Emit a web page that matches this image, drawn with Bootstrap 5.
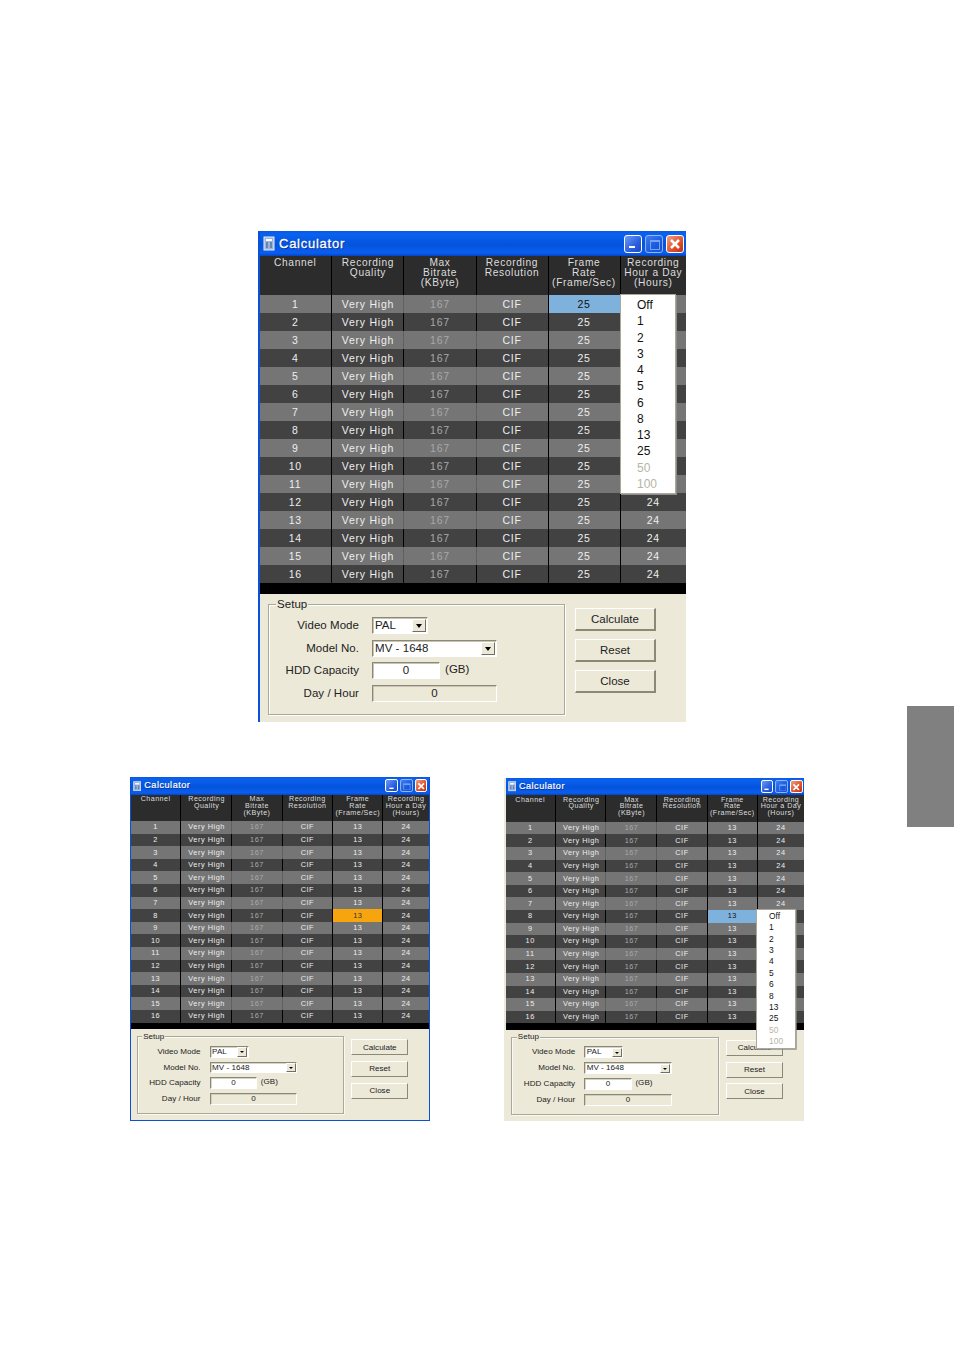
<!DOCTYPE html>
<html lang="en">
<head>
<meta charset="utf-8">
<title>Calculator</title>
<link href="https://cdn.jsdelivr.net/npm/bootstrap@5.3.0/dist/css/bootstrap.min.css" rel="stylesheet">
<style>
body{background:#fff;font-family:"Liberation Sans",Arial,sans-serif;}
.sheet{position:relative;width:954px;height:1348px;padding:231px 0 0 258px;overflow:hidden;}
.side-tab{position:absolute;right:0;top:706px;width:47px;height:121px;background:#808080;}
.lower-row{margin:55px 0 0 -128px;gap:74px;}
.calc-win{position:relative;width:428px;height:491px;background:#ece9d8;border-left:2px solid #0a50d8;flex:none;}
.win-small{zoom:.7;}
.win-framed{border:2px solid #0a50d8;border-top:0;}
.win-shift{margin-top:1px;width:429px;border-left:3px solid #ece9d8;}
.title-strip{height:25px;padding:0 2px 0 3px;background:linear-gradient(#0a58e4,#0a62ee 12%,#0453dc 55%,#0a5ef0 88%,#0345c0);color:#fff;font-weight:400;font-size:13px;letter-spacing:.75px;-webkit-text-stroke:.3px #fff;text-shadow:1px 1px #0a2f90;}
.title-strip svg{flex:none;}
.wbtn{width:18px;height:18px;border:1px solid #fff;border-radius:3px;background:linear-gradient(135deg,#6f9bf2,#2a5fe0 60%,#1d49c4);margin-left:3px;position:relative;flex:none;}
.wbtn-off{opacity:.55;}
.wbtn-close{background:linear-gradient(135deg,#f0a080,#e0502a 60%,#c03010);}
.wbtn svg{position:absolute;left:2px;top:2px;}
.grid-wrap{background:#000;height:338px;}
.win-small .grid-wrap{height:335.5px;}
.table.calc-table{width:100%;margin:0;border-collapse:collapse;table-layout:fixed;font-size:10.5px;letter-spacing:.75px;--bs-table-bg:transparent;}
.table.calc-table>*>*>*{padding:0;border:0;border-right:1px solid #000;text-align:center;color:#eee;box-shadow:none;background:transparent;white-space:nowrap;overflow:hidden;}
.table.calc-table>*>*>*:last-child{border-right:0;}
.table.calc-table>*>*>*:nth-child(2){padding-left:2px;}
.table.calc-table>*>*>*:nth-child(3){padding-left:1px;}
.table.calc-table>thead>tr>th{height:39px;vertical-align:top;font-size:10.2px;letter-spacing:.65px;font-weight:400;line-height:9.8px;padding-top:2px;background:#2c2c2c;color:#ddd;}
.win-small .table.calc-table>thead>tr>th{height:38px;}
.table.calc-table>tbody>tr>td{height:18px;line-height:17px;vertical-align:middle;}
.table.calc-table>tbody>tr:nth-child(odd)>td{background:#757575;}
.table.calc-table>tbody>tr:nth-child(even)>td{background:#424242;}
.table.calc-table>tbody>tr:nth-child(odd)>td:nth-child(2),.table.calc-table>tbody>tr:nth-child(odd)>td:nth-child(3){border-right-color:#606060;}
.table.calc-table>tbody>tr>td.dim{color:#a8a8a8;}
.table.calc-table>tbody>tr>td.cell-blue{background:#7fb1dd;color:#111;}
.table.calc-table>tbody>tr>td.cell-orange{background:#f7a50f;color:#333;}
.setup-pane{height:128px;padding:10px 0 0 8px;gap:10px;color:#222;font-size:11.5px;letter-spacing:.05px;}
.setup-box{position:relative;width:297px;height:111px;border:1px solid #aca899;box-shadow:1px 1px 0 #fff,inset 1px 1px 0 #fff;padding:12px 0 0 0;}
.setup-title{position:absolute;left:7px;top:-8px;background:#ece9d8;padding:0 1px;line-height:14px;}
.form-line{height:17px;margin-bottom:5.6px;}
.form-line label{width:90px;text-align:right;margin-right:13px;line-height:17px;}
.inset-box{height:17px;background:#fff;border:1px solid;border-color:#8c8878 #fff #fff #8c8878;box-shadow:inset 1px 1px 0 #c8c4b4;line-height:14px;padding:0 2px;position:relative;}
.w-a{width:56px;}.w-b{width:125px;}.w-c{width:68px;text-align:center;}
.inset-off{background:#ece9d8;text-align:center;}
.drop-btn{position:absolute;right:1px;top:1px;width:14px;height:13px;background:#ece9d8;border:1px solid;border-color:#fff #716f64 #716f64 #fff;}
.drop-btn::after{content:"";position:absolute;left:3px;top:4px;border:3.5px solid transparent;border-top:4px solid #000;border-bottom:0;}
.unit-text{margin-left:5px;line-height:15px;}
.btn-stack{padding-top:4px;gap:8px;}
.btn.xp-btn{width:81px;height:23px;padding:0;font-size:11.5px;letter-spacing:0;line-height:19px;color:#222;background:#ece9d8;border:1px solid;border-color:#fff #8c8878 #8c8878 #fff;border-width:1px 2px 2px 1px;border-radius:0;}
.pop-list{position:absolute;left:360px;top:63px;width:56px;height:200px;margin:0;padding:2px 0 0 16px;list-style:none;background:#fff;border:1px solid #aca899;box-shadow:1px 1px 0 #8c8c8c;font-size:12px;line-height:16.25px;color:#111;z-index:2;}
.pop-list .off-item{color:#b8b5a6;}
.pop-row8{top:187px;left:358px;width:57px;padding-left:17px;}
</style>
</head>
<body>
<div class="sheet">
  <div id="big"></div>
  <div class="d-flex align-items-start lower-row">
    <div id="left"></div>
    <div id="right"></div>
  </div>
  <div class="side-tab"></div>
</div>
<script src="https://cdn.jsdelivr.net/npm/bootstrap@5.3.0/dist/js/bootstrap.bundle.min.js"></script>
<script>
function win(o){
  var rows='';
  for(var i=1;i<=16;i++){
    var fr='<td>'+o.rate+'</td>';
    if(i==o.mark) fr='<td class="'+o.cls+'">'+o.rate+'</td>';
    var hours=(i>=o.hideFrom&&i<=o.hideTo)?'':'24';
    rows+='<tr><td>'+i+'</td><td>Very High</td><td class="dim">167</td><td>CIF</td>'+fr+'<td>'+hours+'</td></tr>';
  }
  var pop='';
  if(o.pop){
    pop='<ul class="pop-list '+(o.mark==8?'pop-row8':'')+'">'+
    ['Off','1','2','3','4','5','6','8','13','25'].map(function(t){return '<li>'+t+'</li>'}).join('')+
    '<li class="off-item">50</li><li class="off-item">100</li></ul>';
  }
  return '<div class="calc-win '+o.extra+'">'+
  '<div class="title-strip d-flex align-items-center">'+
    '<svg width="12" height="15" viewBox="0 0 12 15" class="me-1"><rect x="1" y="1" width="10" height="13" fill="#9db4d8" stroke="#e8eef8"/><rect x="3" y="3" width="6" height="2" fill="#fff"/><path d="M3 7h2M7 7h2M3 9h2M7 9h2M3 11h2M7 11h2" stroke="#35558f"/></svg>'+
    '<span class="flex-grow-1">Calculator</span>'+
    '<span class="wbtn"><svg width="12" height="12"><rect x="2" y="8" width="6" height="2" fill="#fff"/></svg></span>'+
    '<span class="wbtn wbtn-off"><svg width="12" height="12"><rect x="2.5" y="3.5" width="9" height="8" fill="none" stroke="#cfe0ff"/><rect x="2" y="2" width="10" height="2" fill="#cfe0ff"/></svg></span>'+
    '<span class="wbtn wbtn-close"><svg width="12" height="12"><path d="M2 2l8 8M10 2l-8 8" stroke="#fff" stroke-width="2.5"/></svg></span>'+
  '</div>'+
  '<div class="grid-wrap"><table class="table calc-table"><colgroup><col style="width:71px"><col style="width:72px"><col style="width:73px"><col style="width:72px"><col style="width:72px"><col></colgroup>'+
  '<thead><tr><th>Channel</th><th>Recording<br>Quality</th><th>Max<br>Bitrate<br>(KByte)</th><th>Recording<br>Resolution</th><th>Frame<br>Rate<br>(Frame/Sec)</th><th>Recording<br>Hour a Day<br>(Hours)</th></tr></thead>'+
  '<tbody>'+rows+'</tbody></table></div>'+
  '<div class="setup-pane d-flex align-items-start">'+
    '<div class="setup-box"><span class="setup-title">Setup</span>'+
      '<div class="form-line d-flex"><label>Video Mode</label><div class="inset-box w-a">PAL<span class="drop-btn"></span></div></div>'+
      '<div class="form-line d-flex"><label>Model No.</label><div class="inset-box w-b">MV - 1648<span class="drop-btn"></span></div></div>'+
      '<div class="form-line d-flex"><label>HDD Capacity</label><div class="inset-box w-c">0</div><span class="unit-text">(GB)</span></div>'+
      '<div class="form-line d-flex"><label>Day / Hour</label><div class="inset-box inset-off w-b">0</div></div>'+
    '</div>'+
    '<div class="btn-stack d-flex flex-column"><button class="btn xp-btn">Calculate</button><button class="btn xp-btn">Reset</button><button class="btn xp-btn">Close</button></div>'+
  '</div>'+pop+'</div>';
}
document.getElementById('big').innerHTML=win({rate:25,mark:1,cls:'cell-blue',pop:true,extra:'',hideFrom:1,hideTo:11});
document.getElementById('left').innerHTML=win({rate:13,mark:8,cls:'cell-orange',pop:false,extra:'win-small win-framed',hideFrom:0,hideTo:0});
document.getElementById('right').innerHTML=win({rate:13,mark:8,cls:'cell-blue',pop:true,extra:'win-small win-shift',hideFrom:8,hideTo:16});
</script>
</body>
</html>
